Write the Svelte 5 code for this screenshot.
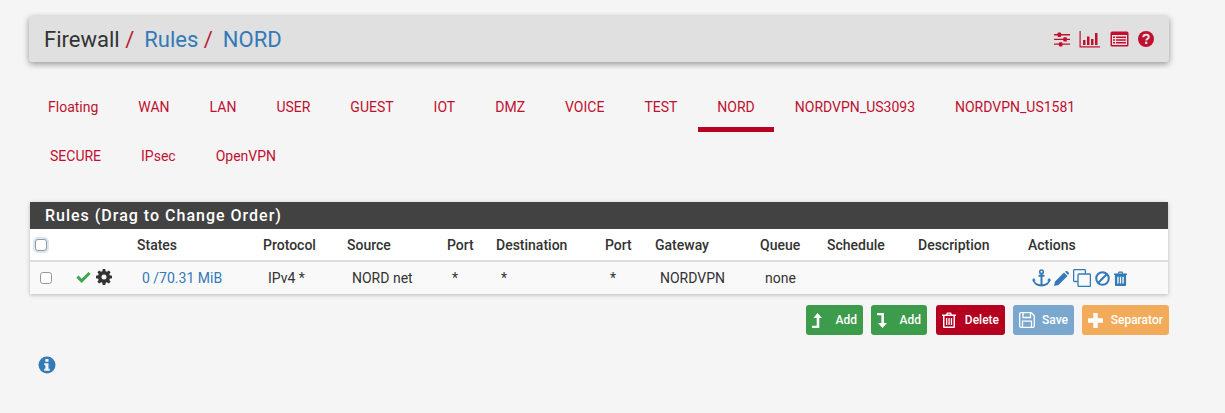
<script lang="ts">
const tabsTop = ["Floating", "WAN", "LAN", "USER", "GUEST", "IOT", "DMZ", "VOICE", "TEST", "NORD", "NORDVPN_US3093", "NORDVPN_US1581"];
const tabsBottom = ["SECURE", "IPsec", "OpenVPN"];
const ACTIVE = "NORD";

// Left edge of each column, taken from where the header text sits.
const columns = [
  { label: "", width: 40 },
  { label: "", width: 62 },
  { label: "States", width: 126 },
  { label: "Protocol", width: 84 },
  { label: "Source", width: 100 },
  { label: "Port", width: 49 },
  { label: "Destination", width: 109 },
  { label: "Port", width: 50 },
  { label: "Gateway", width: 105 },
  { label: "Queue", width: 67 },
  { label: "Schedule", width: 91 },
  { label: "Description", width: 110 },
  { label: "Actions", width: 145 },
];
</script>

<div class="page">
  <header class="title">
    <h1>
      <span>Firewall</span><i>/</i><a href="#rules">Rules</a><i>/</i><a href="#nord">NORD</a>
    </h1>
    <div class="shortcuts">
      <svg width="16" height="15" viewBox="0 0 18 16" preserveAspectRatio="none" fill="currentColor" aria-hidden="true">
        <path d="M0 2.200h18v1.400H0zM0 7.200h18v1.400H0zM0 12.200h18v1.400H0z" />
        <rect x="4" y="0.600" width="4" height="4.600" rx="1" />
        <rect x="10.500" y="5.600" width="4" height="4.600" rx="1" />
        <rect x="5.500" y="10.800" width="4" height="4.600" rx="1" />
      </svg>
      <svg width="21" height="17" viewBox="0 0 21 17" fill="currentColor" aria-hidden="true">
        <path d="M0.500 0h1.200v15.200h19.300v1.300H0.500z" />
        <path d="M4 9h2.500v5H4zM8 5.500h2.500V14H8zM12 8h2.500v6H12zM16 2h2.500v12H16z" />
      </svg>
      <svg class="sheet" width="19" height="16" viewBox="0 0 19 16" aria-hidden="true">
        <rect x="0.500" y="0.500" width="18" height="15" rx="1.500" fill="currentColor" />
        <rect x="2" y="4" width="15" height="10" fill="#f3dfe3" />
        <path d="M3 5.500h2v1.500H3zM6 5.500h10v1.500H6zM3 8.300h2v1.500H3zM6 8.300h10v1.500H6zM3 11h2v1.500H3zM6 11h10v1.500H6z" fill="currentColor" />
      </svg>
      <svg width="16" height="16" viewBox="0 0 16 16" aria-hidden="true">
        <circle cx="8" cy="8" r="8" fill="currentColor" />
        <path d="M5.200 6.200C5.300 4.500 6.500 3.700 8 3.700c1.600 0 2.800.9 2.800 2.300 0 1.900-2.600 1.900-2.600 3.500" fill="none" stroke="#e0e0e0" stroke-width="2" />
        <rect x="7" y="10.700" width="2.300" height="2.200" fill="#e0e0e0" />
      </svg>
    </div>
  </header>

  <nav class="tabs">
    <ul class="first">
      {#each tabsTop as tab}
        <li class:active={tab === ACTIVE}><a href="#tab">{tab}</a></li>
      {/each}
    </ul>
    <ul class="second">
      {#each tabsBottom as tab}
        <li><a href="#tab">{tab}</a></li>
      {/each}
    </ul>
  </nav>

  <section class="panel">
    <h2>Rules (Drag to Change Order)</h2>
    <table>
      <colgroup>
        {#each columns as c}
          <col style="width: {c.width}px" />
        {/each}
      </colgroup>
      <thead>
        <tr>
          <th class="check"><span class="box focus"></span></th>
          {#each columns.slice(1) as c}
            <th>{c.label}</th>
          {/each}
        </tr>
      </thead>
      <tbody>
        <tr>
          <td class="check"><span class="box"></span></td>
          <td class="status">
            <div class="state">
              <svg width="15" height="12" viewBox="0 0 16 13" fill="#3ea650" aria-hidden="true">
                <path d="M0.300 7.300 2.600 5 6 8.400 13.400 1 15.700 3.300 6 13z" />
              </svg>
              <svg width="16" height="16" viewBox="0 0 16 16" aria-hidden="true">
                <path d="M6.700 0h2.600l.4 2.200 1.200.5 1.900-1.300 1.800 1.800-1.300 1.900.5 1.200 2.200.4v2.600l-2.200.4-.5 1.200 1.300 1.900-1.800 1.800-1.900-1.300-1.200.5-.4 2.200H6.700l-.4-2.200-1.200-.5-1.900 1.300-1.800-1.800 1.300-1.900-.5-1.200L0 9.300V6.700l2.200-.4.500-1.200-1.300-1.900 1.800-1.800 1.900 1.300 1.200-.5zM8 5.500a2.500 2.500 0 1 0 0 5 2.500 2.500 0 0 0 0-5z" fill="#333" fill-rule="evenodd" />
              </svg>
            </div>
          </td>
          <td><a href="#states">0 /70.31 MiB</a></td>
          <td>IPv4 *</td>
          <td>NORD net</td>
          <td>*</td>
          <td>*</td>
          <td>*</td>
          <td>NORDVPN</td>
          <td>none</td>
          <td></td>
          <td></td>
          <td class="actions">
            <div class="icons">
              <svg width="19" height="18" viewBox="0 0 19 18" fill="none" stroke="#337ab7" aria-hidden="true">
                <circle cx="9.500" cy="2.800" r="1.800" stroke-width="1.600" />
                <path d="M9.500 4.500V16.500M6.500 6.700h6" stroke-width="2" />
                <path d="M1.500 10.500c.2 3.800 4 5.800 8 6 4-.2 7.800-2.200 8-6" stroke-width="2" />
                <path d="M0 11.500 1.800 9l2 2.500zM15 11.500 17.200 9l1.800 2.500z" fill="#337ab7" stroke="none" />
              </svg>
              <svg width="15" height="15" viewBox="0 0 15 15" fill="#337ab7" aria-hidden="true">
                <path d="M0 15 1 10.500 10 1.500 13.500 5 4.500 14zM11 .7 12 0c.5-.2 1 0 1.300.2l1.500 1.500c.3.400.3.900 0 1.300l-.7 1z" />
              </svg>
              <svg width="18" height="18" viewBox="0 0 18 18" fill="none" stroke="#337ab7" stroke-width="1.300" aria-hidden="true">
                <path d="M4.500 12.500H1.600a1 1 0 0 1-1-1V1.600a1 1 0 0 1 1-1h9.800a1 1 0 0 1 1 1V4.500" />
                <rect x="5" y="5" width="12.400" height="12.400" rx="1" />
              </svg>
              <svg width="15" height="15" viewBox="0 0 16 16" fill="none" stroke="#337ab7" stroke-width="2.200" aria-hidden="true">
                <circle cx="8" cy="8" r="6.700" />
                <path d="M3.500 12.500 12.500 3.500" />
              </svg>
              <svg width="13" height="15" viewBox="0 0 14 16" fill="#337ab7" aria-hidden="true">
                <path fill-rule="evenodd" d="M0 2.500h4L5 .5h4l1 2h4v1.800h-1V15a1 1 0 0 1-1 1H2a1 1 0 0 1-1-1V4.300H0zM5.800 1.700l-.4.800h3.200l-.4-.8zM3.500 6v7.500H5V6zM6.300 6v7.500h1.400V6zM9 6v7.500h1.500V6z" />
              </svg>
            </div>
          </td>
        </tr>
      </tbody>
    </table>
  </section>

  <div class="buttons">
    <button class="green">
      <svg width="11" height="15" viewBox="0 0 11 15" fill="#fff" aria-hidden="true"><path d="M5.500 0 10 5H7.300v10H0v-2.300h4.700V5H1.500z" /></svg>
      Add
    </button>
    <button class="green">
      <svg width="11" height="15" viewBox="0 0 11 15" fill="#fff" aria-hidden="true"><path d="M0 0h7v10h3l-4.500 5L1 10h3.400V2.300H0z" /></svg>
      Add
    </button>
    <button class="red">
      <svg width="14" height="16" viewBox="0 0 14 16" fill="#fff" aria-hidden="true">
        <path fill-rule="evenodd" d="M0 2.500h4L5 .5h4l1 2h4v1.500h-1V15a1 1 0 0 1-1 1H2a1 1 0 0 1-1-1V4H0zM5.800 1.700l-.4.800h3.200l-.4-.8zM2.500 4v10.500h9V4zM4 6h1.300v7H4zM6.400 6h1.300v7H6.400zM8.800 6h1.300v7H8.800z" />
      </svg>
      Delete
    </button>
    <button class="blue">
      <svg width="16" height="16" viewBox="0 0 16 16" fill="none" stroke="#fff" stroke-width="1.300" aria-hidden="true">
        <path d="M.7 2a1.300 1.300 0 0 1 1.300-1.300h10.300L15.300 3.700V14a1.300 1.300 0 0 1-1.300 1.300H2A1.300 1.300 0 0 1 .7 14z" />
        <path d="M4 1v4.500h7.500V1M3.500 15V9.200h9V15" />
      </svg>
      Save
    </button>
    <button class="orange">
      <svg width="15" height="15" viewBox="0 0 15 15" fill="#fff" aria-hidden="true"><path d="M5.300 0h4.400v5.300H15v4.400H9.700V15H5.300V9.700H0V5.300h5.300z" /></svg>
      Separator
    </button>
  </div>

  <div class="info">
    <svg width="18" height="18" viewBox="0 0 18 18" aria-hidden="true">
      <circle cx="9" cy="9" r="8.500" fill="#337ab7" />
      <rect x="7.300" y="3" width="3.200" height="2.800" fill="#f5f5f5" />
      <path d="M6.200 7.200h4.300v5.500h1.200v2.100H6.200v-2.100h1.200V9.300H6.200z" fill="#f5f5f5" />
    </svg>
  </div>
</div>

<style>
  :global(body) {
    background: #f5f5f5;
    font-family: Roboto, sans-serif;
    color: #333;
  }
  a {
    text-decoration: none;
  }
  .page {
    width: 1140px;
    padding: 16px 0 0 29px;
  }
  .title {
    display: flex;
    align-items: center;
    justify-content: space-between;
    height: 46px;
    padding: 0 15px;
    background: #e0e0e0;
    border-radius: 3px;
    box-shadow: 0 2px 6px rgba(0, 0, 0, 0.4);
  }
  h1 {
    margin: 0;
    font-size: 22px;
    font-weight: 400;
    color: #333;
  }
  h1 a {
    color: #337ab7;
  }
  h1 i {
    font-style: normal;
    color: #b71c34;
    margin: 0 10px 0 5.5px;
  }
  .shortcuts {
    display: flex;
    align-items: center;
    gap: 9px;
    color: #c0102f;
  }
  .sheet {
    margin-left: 1px;
  }
  .tabs {
    margin-top: 20px;
  }
  .tabs ul {
    display: flex;
    list-style: none;
    margin: 0;
    padding: 0 0 0 1px;
  }
  .tabs ul.first {
    padding: 0;
    margin-left: -1px;
  }
  .tabs ul.second {
    margin-top: -1px;
  }
  .tabs li {
    position: relative;
    height: 50px;
    box-sizing: border-box;
    padding: 0 20px;
    font-size: 14px;
    line-height: 50px;
  }
  .tabs li a {
    color: #c0102f;
  }
  .tabs li.active::after {
    content: "";
    position: absolute;
    left: 1px;
    right: 1px;
    bottom: 0;
    height: 5px;
    background: #b90022;
  }
  .panel {
    margin: 21px 0 0 1px;
    width: 1138px;
    box-shadow: 0 1px 4px rgba(0, 0, 0, 0.25);
  }
  h2 {
    margin: 0;
    height: 27px;
    padding-left: 15px;
    background: #424242;
    color: #fff;
    font-size: 16px;
    font-weight: 500;
    line-height: 27px;
    letter-spacing: 1px;
  }
  table {
    width: 1138px;
    table-layout: fixed;
    border-collapse: collapse;
    font-size: 14px;
  }
  th {
    height: 31px;
    padding: 0 0 0 5px;
    background: #fff;
    border-bottom: 2px solid #ddd;
    font-weight: 500;
    text-align: left;
  }
  td {
    height: 32px;
    padding: 0 0 0 10px;
    background: #f9f9f9;
  }
  td a {
    color: #337ab7;
  }
  .check {
    padding-left: 5px;
  }
  td.check {
    padding-left: 10px;
  }
  .box {
    display: block;
    box-sizing: border-box;
    width: 12px;
    height: 12px;
    background: #fff;
    border: 1px solid #999;
    border-radius: 3px;
  }
  .box.focus {
    margin-top: 1px;
    box-shadow: 0 0 0 2px #d6e6f6;
  }
  .status {
    padding-left: 6px;
  }
  .state {
    display: flex;
    align-items: center;
    gap: 5px;
    margin-top: -3px;
  }
  .actions {
    padding-left: 9px;
  }
  .icons {
    display: flex;
    align-items: center;
    gap: 4px;
  }
  .icons svg:nth-child(2) {
    margin-left: -1px;
  }
  .buttons {
    display: flex;
    justify-content: flex-end;
    gap: 8px;
    margin-top: 11px;
  }
  button {
    display: flex;
    align-items: center;
    justify-content: space-between;
    box-sizing: border-box;
    height: 30px;
    padding: 0 5px;
    border: 1px solid transparent;
    border-radius: 3px;
    color: #fff;
    font: 500 12px Roboto, sans-serif;
  }
  .green {
    width: 57px;
    background: #3d9b4c;
  }
  .green + .green {
    width: 56px;
    margin-right: 1px;
  }
  .red {
    width: 69px;
    background: #b5001f;
  }
  .blue {
    width: 61px;
    background: #7aa7cd;
  }
  .orange {
    width: 87px;
    background: #f2ab5a;
  }
  .info {
    margin: 21px 0 0 9px;
    height: 18px;
  }
</style>
